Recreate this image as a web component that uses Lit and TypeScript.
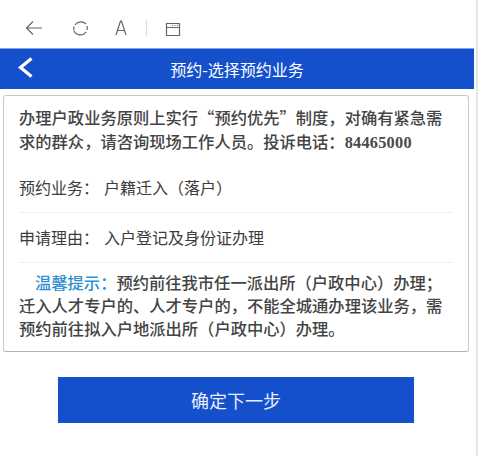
import { LitElement, html, css } from 'lit';
import { customElement } from 'lit/decorators.js';

@customElement('app-root')
export class AppRoot extends LitElement {
  static styles = css`
    :host {
      display: block;
      width: 503px;
      height: 456px;
      overflow: hidden;
      background: #fff;
      font-family: "Noto Sans CJK SC", "Liberation Sans", sans-serif;
    }
    .Frame {
      width: 476px;
      height: 456px;
      border-right: 2px solid #e6e6e6;
    }
    .Toolbar {
      height: 48px;
      display: flex;
      align-items: flex-end;
    }
    .Toolbar svg {
      display: block;
      margin-bottom: 10px;
    }
    .Header {
      width: 474px;
      height: 41px;
      box-sizing: border-box;
      border-top: 1px solid #7fa3ee;
      background: #1550cc;
      color: #fff;
      font-size: 16px;
      display: flex;
      align-items: center;
      justify-content: center;
      position: relative;
    }
    .Back {
      position: absolute;
      left: 17px;
      top: 8px;
    }
    .Card {
      margin: 6px 0 0 3px;
      width: 466px;
      height: 257px;
      box-sizing: border-box;
      border: 1px solid #c8c8c8;
      border-bottom-color: #b0b0b0;
      border-radius: 3px;
      padding: 0 15px;
      color: #3c3c3c;
      font-size: 16px;
      line-height: 22px;
    }
    .Notice {
      box-sizing: border-box;
      padding-top: 9px;
      height: 67px;
      font-size: 16.3px;
      line-height: 24px;
      font-weight: 500;
      color: #444;
    }
    .Phone {
      font-family: "Liberation Serif", serif;
      font-weight: 700;
      letter-spacing: 0.25px;
      line-height: 1;
      color: #4a4a4a;
    }
    .Row {
      height: 50px;
      box-sizing: border-box;
      padding-bottom: 2px;
      display: flex;
      align-items: center;
      border-bottom: 1px solid #f0f0f0;
    }
    .Row span:first-child {
      width: 85px;
    }
    .Tip {
      padding-top: 8px;
      font-size: 16.3px;
      line-height: 23px;
      text-indent: 16px;
      font-weight: 500;
      color: #444;
    }
    .TipLabel {
      color: #2f8fd0;
    }
    .Next {
      display: flex;
      align-items: center;
      justify-content: center;
      margin: 25px 0 0 58px;
      width: 356px;
      height: 46px;
      background: #1550cc;
      color: #e8eefc;
      font-size: 18px;
    }
  `;

  render() {
    return html`
      <div class="Frame">
        <div class="Toolbar">
          <svg width="186" height="20" viewBox="0 0 186 20" fill="none" stroke="#666" stroke-width="1.2">
            <path d="M42 10H27M33 3.500L26.500 10l6.500 6.500" />
            <path d="M86 6a7 7 0 0 0-11 1M74 13a7 7 0 0 0 12 1M74 8.500a7 7 0 0 0 0 4M87 12a7 7 0 0 0 0-4" />
            <path d="M116 17l4.500-14h1l4.500 14M117.500 12.500h7" />
            <path d="M146.500 2v16" stroke="#ddd" />
            <path d="M166.500 5.500h13v12h-13zM166.500 9.500h13" />
            <path d="M172 7.500h1M174.500 7.500h1M177 7.500h1" />
          </svg>
        </div>
        <div class="Header">
          <svg class="Back" width="18" height="22" viewBox="0 0 18 22" fill="none" stroke="#fff" stroke-width="3.200">
            <path d="M14.500 1.500L3.500 10.500l11 9" />
          </svg>
          预约-选择预约业务
        </div>
        <div class="Card">
          <div class="Notice">办理户政业务原则上实行“预约优先”制度，对确有紧急需求的群众，请咨询现场工作人员。投诉电话：<span class="Phone">84465000</span></div>
          <div class="Row"><span>预约业务：</span><span>户籍迁入（落户）</span></div>
          <div class="Row"><span>申请理由：</span><span>入户登记及身份证办理</span></div>
          <div class="Tip"><span class="TipLabel">温馨提示：</span><span>预约前往我市任一派出所（户政中心）办理；迁入人才专户的、人才专户的，不能全城通办理该业务，需预约前往拟入户地派出所（户政中心）办理。</span></div>
        </div>
        <div class="Next">确定下一步</div>
      </div>
    `;
  }
}
